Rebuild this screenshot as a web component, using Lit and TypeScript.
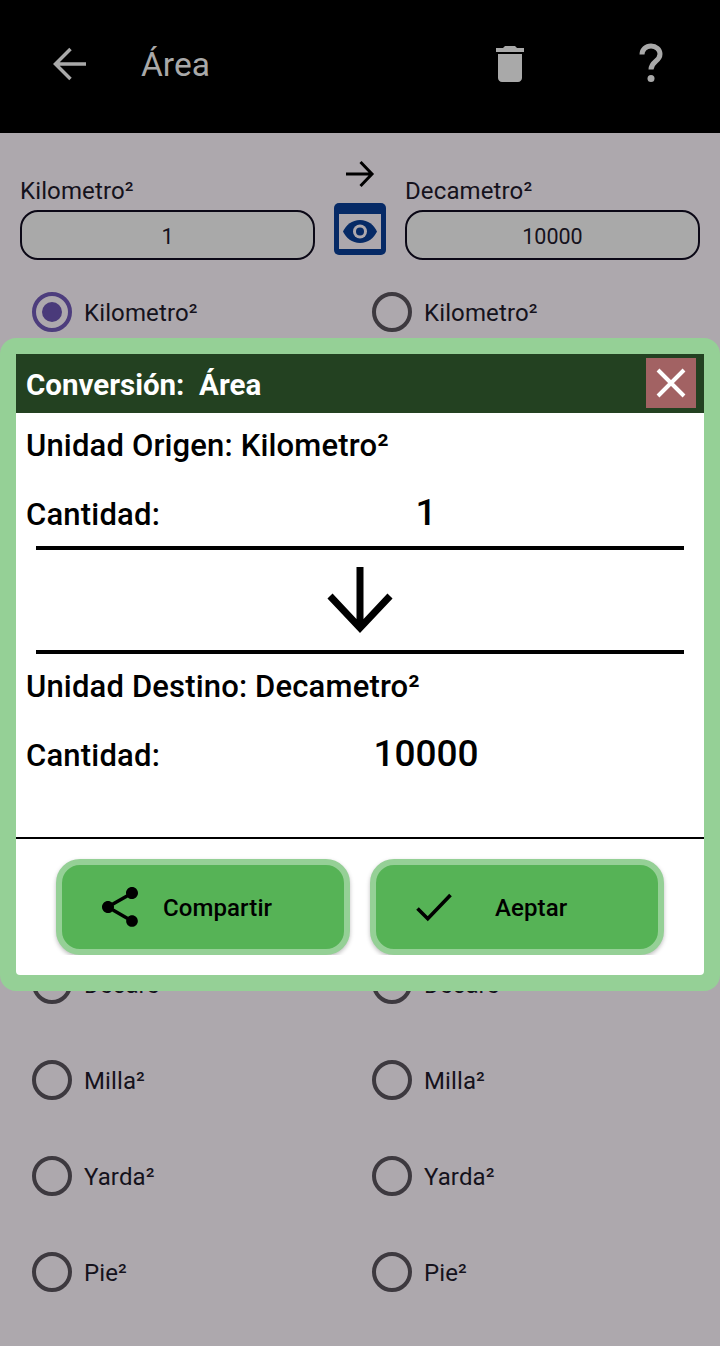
import { LitElement, html, css } from "lit";
import { customElement } from "lit/decorators.js";

const UNITS = ["Kilometro²","","","","","","","Decare","Milla²","Yarda²","Pie²"];

@customElement("app-root")
export class AppRoot extends LitElement {
  static styles = css`
    :host { display:block; position:relative; width:720px; height:1346px; overflow:hidden; background:#ada8ad; font-family:Roboto,sans-serif; color:#15121c; }
    .bar { height:133px; background:#000; display:flex; align-items:center; color:#a9a9a9; box-sizing:border-box; padding-bottom:5px; }
    .bar svg { display:block; flex:none; }
    .back { margin-left:46px; }
    .title { margin-left:47px; font-size:33.5px; flex:1; line-height:40px; padding-top:2px; }
    .trash { margin-right:102px; }
    .help { margin-right:54px; }
    .conv { display:grid; grid-template-columns:295px 90px 295px; padding:26px 20px 0; height:127px; box-sizing:border-box; }
    .col { display:flex; flex-direction:column; padding-top:17px; }
    .lab { font-size:24px; line-height:28px; height:34px; padding-top:1px; box-sizing:border-box; letter-spacing:.12px; }
    .inp { height:50px; box-sizing:border-box; border:2px solid #0b0816; border-radius:18px; background:#a9a9a9; display:flex; align-items:center; justify-content:center; font-size:21.5px; padding-top:3px; }
    .mid { display:flex; flex-direction:column; align-items:center; }
    .eye { margin-top:14px; }
    .list { display:grid; grid-template-columns:340px 340px; padding-left:32px; margin-top:32px; grid-auto-rows:96px; }
    .opt { display:flex; align-items:center; height:40px; gap:12px; font-size:24px; letter-spacing:.12px; }
    .opt span { padding-top:2px; }
    .radio { width:40px; height:40px; border-radius:50%; box-sizing:border-box; border:4px solid #3d393f; display:flex; align-items:center; justify-content:center; flex:none; }
    .radio.on { border-color:#4d3d7d; }
    .radio.on::after { content:""; width:20px; height:20px; border-radius:50%; background:#4a3a7a; }
    .dialog { position:absolute; left:0; top:338px; width:720px; height:653px; background:#95d096; border-radius:16px; padding:16px; box-sizing:border-box; }
    .head { height:59px; background:#234121; display:flex; align-items:center; padding-left:10px; color:#fff; font-weight:700; font-size:29.5px; position:relative; white-space:pre; }
    .head span { padding-top:2px; }
    .close { position:absolute; right:8px; top:4px; width:50px; height:50px; background:#a26263; display:flex; align-items:center; justify-content:center; }
    .body { background:#fff; height:562px; border-radius:0 0 4px 4px; color:#000; display:flex; flex-direction:column; position:relative; }
    .line { font-size:31px; font-weight:500; letter-spacing:.16px; padding-left:10px; line-height:34px; height:34px; margin-top:16px; margin-bottom:-1px; }
    .qty { display:grid; grid-template-columns:330px 140px; align-items:center; padding-left:10px; font-size:31px; font-weight:500; letter-spacing:.2px; height:50px; margin-top:27px; }
    .qty b { font-size:37px; font-weight:500; text-align:center; padding-bottom:4px; letter-spacing:0; }
    .hr { height:4px; background:#000; margin:0 20px; }
    .hr.first { margin-top:7px; }
    .down { display:flex; justify-content:center; height:100px; align-items:center; }
    .down svg { display:block; }
    .spacer { height:57px; }
    .sep { height:2px; background:#000; }
    .btns { display:flex; gap:20px; padding:20px 40px 0; height:116px; box-sizing:border-box; overflow:hidden; }
    .btn { width:294px; height:96px; box-sizing:border-box; border:6px solid #95d096; border-radius:24px; background:#56b356; display:flex; align-items:center; font-size:24px; font-weight:500; letter-spacing:.1px; box-shadow:0 2px 4px rgba(0,0,0,.25); }
    .btn span { padding-top:2px; }
    .b1 svg { margin-left:34px; }
    .b1 span { margin-left:19px; }
    .b2 svg { margin-left:36px; }
    .b2 span { margin-left:39px; }
  `;

  render() {
    return html`
      <div class="bar">
        <svg class="back" width="48" height="48" viewBox="0 0 48 48" fill="none" stroke="#a9a9a9" stroke-width="3.500"><path d="M40 24H10M24.500 9 9.500 24l15 15"/></svg>
        <div class="title">Área</div>
        <svg class="trash" width="48" height="48" viewBox="0 0 24 24" fill="#a9a9a9"><path d="M6 19c0 1.100.9 2 2 2h8c1.100 0 2-.9 2-2V7H6v12zM19 4h-3.500l-1-1h-5l-1 1H5v2h14V4z"/></svg>
        <svg class="help" width="30" height="44" viewBox="0 0 30 44" fill="none"><path d="M6 12.500c0-5 4-8.500 9-8.500s9 3.400 9 8c0 3.500-2 5.500-4.500 7.500C16.500 22 15 23.500 15 27.500" stroke="#a9a9a9" stroke-width="5"/><circle cx="15" cy="36.500" r="3.500" fill="#a9a9a9"/></svg>
      </div>
      <div class="conv">
        <div class="col"><div class="lab">Kilometro²</div><div class="inp">1</div></div>
        <div class="mid">
          <svg width="30" height="30" viewBox="0 0 30 30" fill="none" stroke="#000" stroke-width="3"><path d="M1 15h26M15.500 3 27 15 15.500 27"/></svg>
          <svg class="eye" width="52" height="52" viewBox="0 0 52 52"><rect width="52" height="52" rx="5" fill="#062a66"/><rect x="5" y="11" width="42" height="35" fill="#ada8ad"/><path d="M26 17c-8 0-14 5-17 11.500C12 35 18 40 26 40s14-5 17-11.500C40 22 34 17 26 17z" fill="#062a66"/><circle cx="26" cy="28.500" r="7" fill="#ada8ad"/><circle cx="26" cy="28.500" r="4" fill="#062a66"/></svg>
        </div>
        <div class="col"><div class="lab">Decametro²</div><div class="inp">10000</div></div>
      </div>
      <div class="list">
        ${UNITS.map((u, i) => u ? html`
          <div class="opt"><div class="radio ${i === 0 ? "on" : ""}"></div><span>${u}</span></div>
          <div class="opt"><div class="radio"></div><span>${u}</span></div>` : html`<div></div><div></div>`)}
      </div>
      <div class="dialog">
        <div class="head"><span>Conversión:  Área</span>
          <div class="close"><svg width="30" height="30" viewBox="0 0 30 30" stroke="#fff" stroke-width="4"><path d="M2 2 28 28M28 2 2 28"/></svg></div>
        </div>
        <div class="body">
          <div class="line">Unidad Origen: Kilometro²</div>
          <div class="qty"><div>Cantidad:</div><b>1</b></div>
          <div class="hr first"></div>
          <div class="down"><svg width="68" height="68" viewBox="0 0 68 68" fill="none" stroke="#000" stroke-width="7"><path d="M34 1v62M4 30l30 32 30-32"/></svg></div>
          <div class="hr"></div>
          <div class="line">Unidad Destino: Decametro²</div>
          <div class="qty"><div>Cantidad:</div><b>10000</b></div>
          <div class="spacer"></div>
          <div class="sep"></div>
          <div class="btns">
            <div class="btn b1"><svg width="48" height="48" viewBox="0 0 24 24"><path d="M18 16.080c-.76 0-1.440.3-1.960.77L8.910 12.700c.05-.23.090-.46.090-.7s-.04-.47-.09-.7l7.050-4.110c.54.5 1.250.81 2.040.81 1.660 0 3-1.340 3-3s-1.340-3-3-3-3 1.340-3 3c0 .24.040.47.090.7L8.040 9.810C7.500 9.310 6.790 9 6 9c-1.660 0-3 1.340-3 3s1.340 3 3 3c.79 0 1.500-.31 2.040-.81l7.120 4.160c-.05.21-.08.43-.08.65 0 1.610 1.310 2.920 2.920 2.920s2.920-1.310 2.920-2.920-1.310-2.920-2.920-2.920z"/></svg><span>Compartir</span></div>
            <div class="btn b2"><svg width="44" height="44" viewBox="0 0 24 24" fill="none" stroke="#000" stroke-width="2"><path d="M3 12.800 8.600 18.400 21 5.400"/></svg><span>Aeptar</span></div>
          </div>
        </div>
      </div>
    `;
  }
}
